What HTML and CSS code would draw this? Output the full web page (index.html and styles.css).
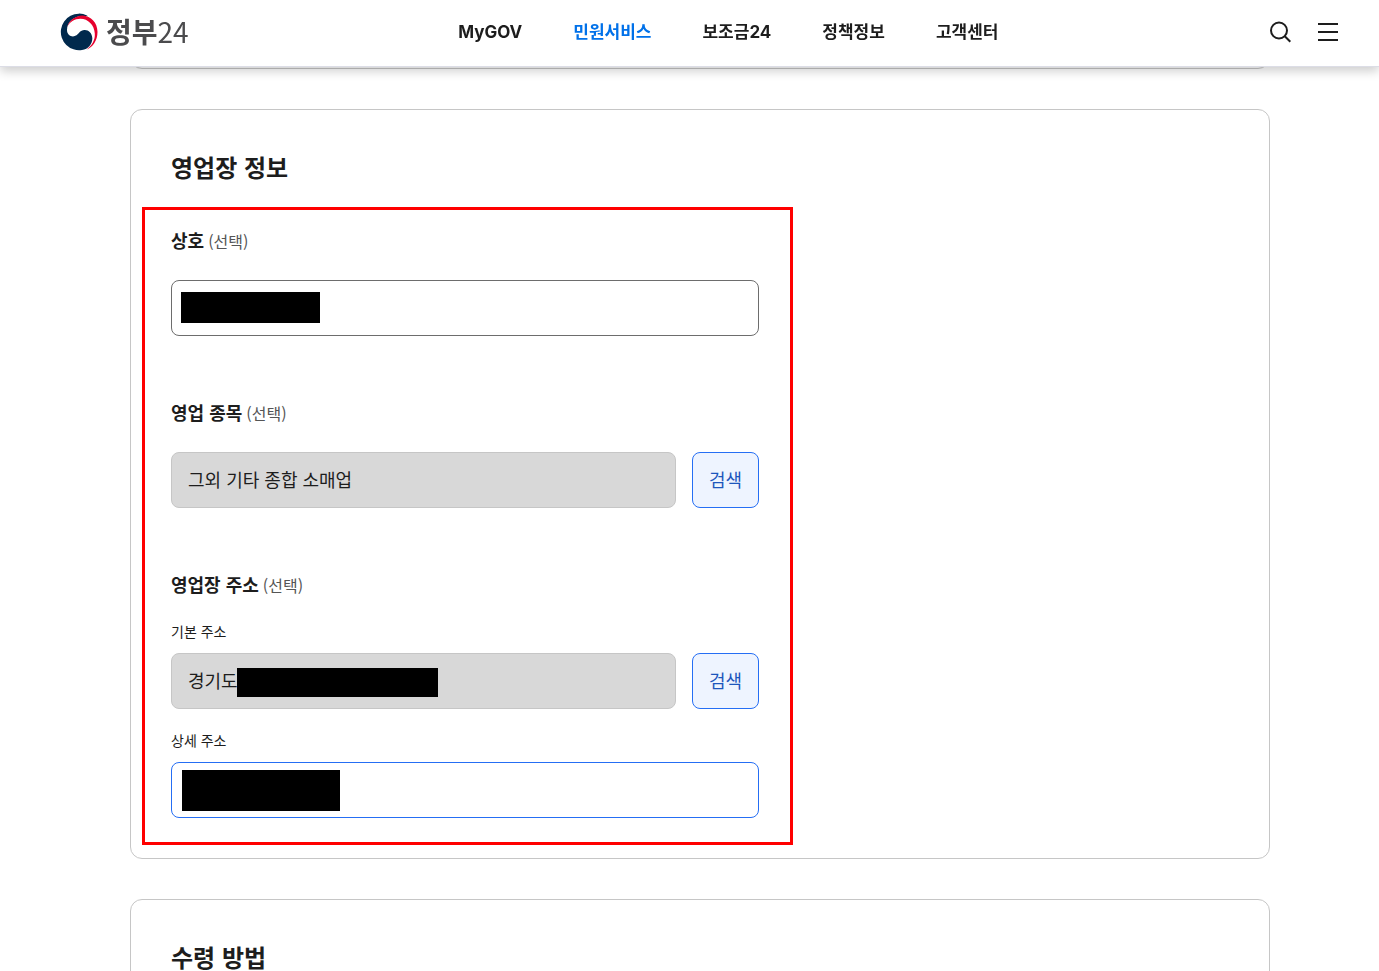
FILE: index.html
```
<!DOCTYPE html>
<html lang="ko">
<head>
    <meta charset="UTF-8">
    <meta name="viewport" content="width=device-width, initial-scale=1.0">
    <title>정부24</title>
    <link rel="stylesheet" href="styles.css">
</head>
<body>
    <header class="header">
        <a class="logo" href="#">
            <svg class="logo-mark" viewBox="0 0 38 38" aria-hidden="true">
                <path fill="#00294d" d="M27 2.4 A18.3 18.3 0 1 0 22 37 C28.500 36 32.500 30.500 32.300 25 C32 20 28.500 16.800 24.500 17 C20 17.300 19 20.500 16.500 22.300 C12.500 25 7 22.500 7 17 C7 9 14 3.200 22 3 C24 2.900 26 2.900 27.800 3.400 Z"/>
                <path fill="#e6002d" d="M7.200 14 C9 7.500 15.500 2.800 22.500 2.600 C31 3 37.500 10 37.500 19 C37.500 27.500 33 34 26.500 36.700 C32 32.500 35.300 27 34.800 20.500 C34.300 12 28 5.800 20.500 5.800 C14.500 5.800 9.500 9 7.200 14 Z"/>
            </svg>
            <span class="logo-text">정부<span>24</span></span>
        </a>
        <nav class="nav">
            <a href="#">MyGOV</a>
            <a class="active" href="#">민원서비스</a>
            <a href="#">보조금24</a>
            <a href="#">정책정보</a>
            <a href="#">고객센터</a>
        </nav>
        <div class="tools">
            <button class="icon-btn" type="button" aria-label="검색">
                <svg viewBox="0 0 24 24"><circle cx="11" cy="10.500" r="8"/><path d="M16.800 16.300 L22.300 21.800"/></svg>
            </button>
            <button class="icon-btn" type="button" aria-label="전체메뉴">
                <svg viewBox="0 0 24 24"><path d="M2 4 H22 M2 12 H22 M2 20 H22"/></svg>
            </button>
        </div>
    </header>

    <main class="content">
        <section class="card card-prev"></section>

        <section class="card">
            <h2>영업장 정보</h2>
            <form class="fields">
                <div class="field">
                    <label class="label" for="shopName">상호<span>(선택)</span></label>
                    <div class="row">
                        <input type="text" id="shopName">
                        <span class="mask mask-name"></span>
                    </div>
                </div>
                <div class="field">
                    <label class="label" for="shopType">영업 종목<span>(선택)</span></label>
                    <div class="row">
                        <input type="text" id="shopType" value="그외 기타 종합 소매업" readonly>
                        <button class="search-btn" type="button">검색</button>
                    </div>
                </div>
                <div class="field">
                    <div class="label group-label">영업장 주소<span>(선택)</span></div>
                    <label class="sub-label" for="addrBase">기본 주소</label>
                    <div class="row">
                        <input type="text" id="addrBase" value="경기도" readonly>
                        <span class="mask mask-base"></span>
                        <button class="search-btn" type="button">검색</button>
                    </div>
                    <label class="sub-label" for="addrDetail">상세 주소</label>
                    <div class="row">
                        <input class="focused" type="text" id="addrDetail">
                        <span class="mask mask-detail"></span>
                    </div>
                </div>
            </form>
        </section>

        <section class="card">
            <h2>수령 방법</h2>
        </section>
    </main>
</body>
</html>
```

FILE: styles.css
```
* {
    box-sizing: border-box;
}
body {
    margin: 0;
    background-color: #fff;
    color: #1d1d1d;
    font-family: "Noto Sans CJK KR", sans-serif;
    font-size: 18px;
}
a {
    color: inherit;
    text-decoration: none;
}

/* header */
.header {
    position: fixed;
    top: 0;
    left: 0;
    right: 0;
    z-index: 10;
    display: flex;
    justify-content: space-between;
    align-items: center;
    height: 67px;
    padding: 0 39px 3px 60px;
    background-color: #fff;
    border-bottom: 1px solid #dcdde6;
    box-shadow: 0 4px 10px rgba(0, 0, 0, 0.2);
}
.logo {
    display: flex;
    align-items: center;
    gap: 8px;
}
.logo-mark {
    width: 38px;
    height: 38px;
}
.logo-text {
    padding-bottom: 2px;
    color: #4b4b4d;
    font-size: 28px;
    font-weight: 700;
    line-height: 38px;
}
.logo-text span {
    font-weight: 400;
}
.nav {
    display: flex;
    gap: 51px;
    font-family: Inter, "Noto Sans CJK KR", sans-serif;
    font-size: 17px;
    font-weight: 700;
    line-height: 26px;
}
.nav .active {
    color: #0071e9;
}
.tools {
    display: flex;
    gap: 24px;
}
.icon-btn {
    width: 24px;
    height: 24px;
    padding: 0;
    border: none;
    background: none;
    cursor: pointer;
}
.icon-btn svg {
    display: block;
    fill: none;
    stroke: #1d1d1d;
    stroke-width: 2;
}

/* cards */
.content {
    display: flex;
    flex-direction: column;
    gap: 40px;
    padding: 0 109px 40px 130px;
}
.card {
    padding: 40px;
    border: 1px solid #c6c6c6;
    border-radius: 12px;
}
.card-prev {
    height: 69px;
    padding: 0;
}
.card h2 {
    margin: 0 0 44px;
    font-size: 24px;
    font-weight: 700;
    line-height: 34px;
}

/* form */
.fields {
    position: relative;
    display: flex;
    flex-direction: column;
    gap: 64px;
    max-width: 588px;
}
.fields::after {
    content: "";
    position: absolute;
    inset: -21px -34px -27px -29px;
    border: 3px solid #f00;
    pointer-events: none;
}
.label {
    display: block;
    margin-bottom: 28px;
    font-weight: 700;
    line-height: 24px;
}
.group-label {
    margin-bottom: 26px;
}
.label span {
    margin-left: 4px;
    color: #555;
    font-size: 16px;
    font-weight: 400;
    line-height: 1;
}
.sub-label {
    display: block;
    margin: 22px 0 13px;
    font-size: 14px;
    line-height: 18px;
}
.row {
    position: relative;
    display: flex;
    gap: 16px;
}
.row input {
    flex: 1;
    min-width: 0;
    height: 56px;
    padding: 0 16px 2px;
    border: 1px solid #6d6d6d;
    border-radius: 8px;
    background-color: #fff;
    color: #1d1d1d;
    font: inherit;
    outline: none;
}
.row input:read-only {
    border-color: #c6c6c6;
    background-color: #d8d8d8;
}
.row input.focused {
    border-color: #256ef4;
}
.search-btn {
    padding: 0 16px 2px;
    border: 1px solid #256ef4;
    border-radius: 8px;
    background-color: #eef4ff;
    color: #1d56bc;
    font: inherit;
    cursor: pointer;
}

/* blacked-out values */
.mask {
    position: absolute;
    background-color: #000;
}
.mask-name {
    top: 12px;
    left: 10px;
    width: 139px;
    height: 31px;
}
.mask-base {
    top: 15px;
    left: 66px;
    width: 201px;
    height: 29px;
}
.mask-detail {
    top: 8px;
    left: 11px;
    width: 158px;
    height: 41px;
}
```
